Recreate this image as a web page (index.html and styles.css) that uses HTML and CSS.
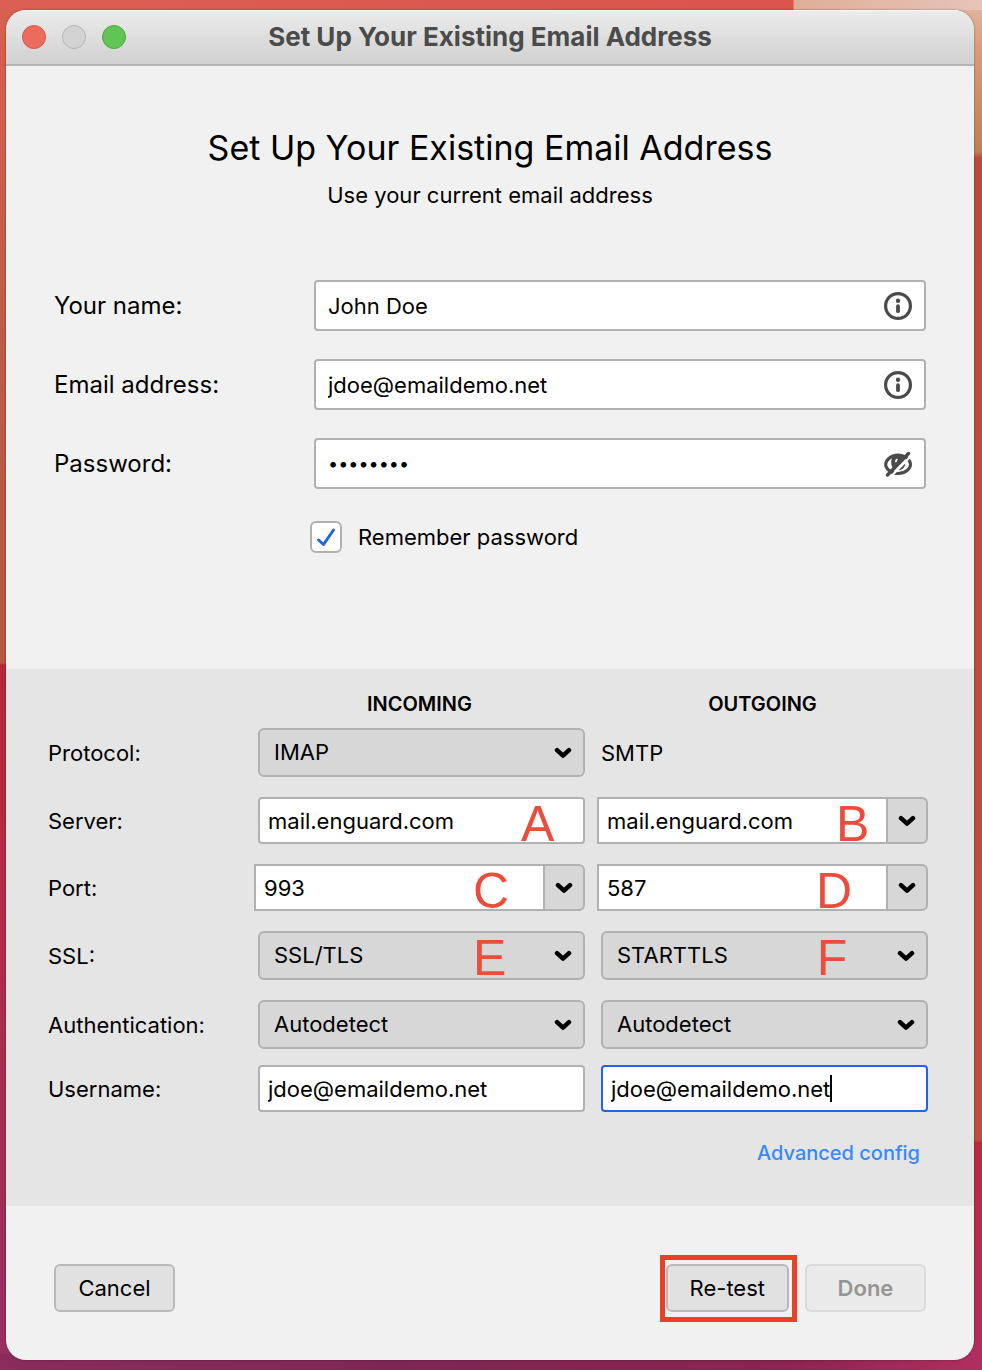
FILE: index.html
```html
<!DOCTYPE html>
<html lang="en">
<head>
    <meta charset="utf-8">
    <meta name="viewport" content="width=device-width, initial-scale=1.0">
    <title>Set Up Your Existing Email Address</title>
    <link rel="stylesheet" href="styles.css">
</head>
<body>
    <!-- Shared icons -->
    <svg class="icon-defs" width="0" height="0" aria-hidden="true">
        <symbol id="chevron" viewBox="0 0 18 12">
            <path d="M3 3.200l6 5.500 6-5.500" fill="none" stroke="#000" stroke-width="4.500" stroke-linecap="round" stroke-linejoin="round"/>
        </symbol>
        <symbol id="info" viewBox="0 0 28 28">
            <circle cx="14" cy="14" r="12.400" fill="none" stroke="#4a4a4a" stroke-width="3.200"/>
            <circle cx="14" cy="8.700" r="2.200" fill="#4a4a4a"/>
            <path d="M14 14.200v5" stroke="#4a4a4a" stroke-width="3.800" stroke-linecap="round"/>
        </symbol>
    </svg>

    <div class="window">
        <div class="titlebar">
            <div class="lights">
                <span class="light light-close"></span>
                <span class="light light-min"></span>
                <span class="light light-zoom"></span>
            </div>
            <div class="titlebar-text">Set Up Your Existing Email Address</div>
        </div>

        <form>
            <div class="account">
                <h1>Set Up Your Existing Email Address</h1>
                <p class="subtitle">Use your current email address</p>

                <div class="account-row">
                    <label for="realname">Your name:</label>
                    <div class="field">
                        <input id="realname" type="text" value="John Doe">
                        <svg class="field-icon"><use href="#info"/></svg>
                    </div>
                </div>
                <div class="account-row">
                    <label for="email">Email address:</label>
                    <div class="field">
                        <input id="email" type="email" value="jdoe@emaildemo.net">
                        <svg class="field-icon"><use href="#info"/></svg>
                    </div>
                </div>
                <div class="account-row">
                    <label for="password">Password:</label>
                    <div class="field">
                        <input id="password" type="password" value="password">
                        <svg class="field-icon" viewBox="0 0 28 28">
                            <path d="M14 5C6.500 5 1.700 10.500 1.700 14.500S6.500 23.500 14 23.500 26.500 18.500 26.500 14.500 21.500 5 14 5z" fill="none" stroke="#4a4a4a" stroke-width="3"/>
                            <path d="M9 5h11l-2 5-8 9c-3-2-4-8-1-14z" fill="#4a4a4a"/>
                            <path d="M13.500 9.300c-1.300.6-1.800 1.900-1.500 3" fill="none" stroke="#fff" stroke-width="1.600"/>
                            <path d="M20 13.500c.2 3-2 5.300-5 5.700" fill="none" stroke="#4a4a4a" stroke-width="2.200"/>
                            <path d="M7 26.500L27.500 5.500" stroke="#fff" stroke-width="2.200"/>
                            <path d="M3.500 25L24.500 3.500" stroke="#4a4a4a" stroke-width="3.400" stroke-linecap="round"/>
                        </svg>
                    </div>
                </div>

                <label class="remember">
                    <span class="checkbox">
                        <input type="checkbox" checked>
                        <svg viewBox="0 0 32 32"><path d="M8.500 19l5 4.500L23.500 9" fill="none" stroke="#2264e5" stroke-width="3" stroke-linecap="round" stroke-linejoin="round"/></svg>
                    </span>
                    Remember password
                </label>
            </div>

            <div class="servers">
                <div class="row row-head">
                    <h2 class="incoming">Incoming</h2>
                    <h2>Outgoing</h2>
                </div>
                <div class="row">
                    <label for="in-protocol">Protocol:</label>
                    <div class="menu">
                        <select id="in-protocol"><option>IMAP</option><option>POP3</option></select>
                        <svg class="chevron"><use href="#chevron"/></svg>
                    </div>
                    <span>SMTP</span>
                </div>
                <div class="row">
                    <label for="in-server">Server:</label>
                    <div class="text">
                        <input id="in-server" type="text" value="mail.enguard.com">
                        <span class="mark mark-edge">A</span>
                    </div>
                    <div class="combo">
                        <input type="text" value="mail.enguard.com" aria-label="Outgoing server">
                        <button type="button" aria-label="Show servers"><svg class="chevron"><use href="#chevron"/></svg></button>
                        <span class="mark mark-combo">B</span>
                    </div>
                </div>
                <div class="row">
                    <label for="in-port">Port:</label>
                    <div class="combo">
                        <input id="in-port" type="text" value="993">
                        <button type="button" aria-label="Show ports"><svg class="chevron"><use href="#chevron"/></svg></button>
                        <span class="mark">C</span>
                    </div>
                    <div class="combo">
                        <input type="text" value="587" aria-label="Outgoing port">
                        <button type="button" aria-label="Show ports"><svg class="chevron"><use href="#chevron"/></svg></button>
                        <span class="mark">D</span>
                    </div>
                </div>
                <div class="row">
                    <label for="in-ssl">SSL:</label>
                    <div class="menu">
                        <select id="in-ssl"><option>SSL/TLS</option><option>STARTTLS</option></select>
                        <svg class="chevron"><use href="#chevron"/></svg>
                        <span class="mark">E</span>
                    </div>
                    <div class="menu">
                        <select aria-label="Outgoing SSL"><option>STARTTLS</option><option>SSL/TLS</option></select>
                        <svg class="chevron"><use href="#chevron"/></svg>
                        <span class="mark">F</span>
                    </div>
                </div>
                <div class="row row-auth">
                    <label for="in-auth">Authentication:</label>
                    <div class="menu">
                        <select id="in-auth"><option>Autodetect</option></select>
                        <svg class="chevron"><use href="#chevron"/></svg>
                    </div>
                    <div class="menu">
                        <select aria-label="Outgoing authentication"><option>Autodetect</option></select>
                        <svg class="chevron"><use href="#chevron"/></svg>
                    </div>
                </div>
                <div class="row row-user">
                    <label for="in-user">Username:</label>
                    <div class="text">
                        <input id="in-user" type="text" value="jdoe@emaildemo.net">
                    </div>
                    <div class="text">
                        <input class="active" type="text" value="jdoe@emaildemo.net" aria-label="Outgoing username">
                        <span class="caret"></span>
                    </div>
                </div>
                <div class="advanced"><a href="#">Advanced config</a></div>
            </div>

            <div class="footer">
                <button type="button" class="btn">Cancel</button>
                <div class="footer-right">
                    <div class="highlight"><button type="button" class="btn">Re-test</button></div>
                    <button type="submit" class="btn btn-done" disabled>Done</button>
                </div>
            </div>
        </form>
    </div>
</body>
</html>
```
FILE: styles.css
```css
* {
    box-sizing: border-box;
}
body {
    margin: 0;
    padding: 10px 8px 10px 6px;
    min-height: 100vh;
    font-family: Inter, "Liberation Sans", sans-serif;
    font-size: 22px;
    line-height: 28px;
    color: #000;
    background:
        linear-gradient(to right, #8a2c5c, #7f2753 40%, #8a2450 80%, #b02f60) bottom / 100% 16px no-repeat,
        linear-gradient(to right, #dc5f54, #d9544c 793px, #e0ae98 794px, #e6c4b8) top / 100% 10px no-repeat,
        linear-gradient(#e3b8a4, #d99b7a 50px, #bf8055 152px, #b94a40 158px, #bc4f42 1140px, #b92a42 1143px, #b02f60) right / 40px 100% no-repeat,
        linear-gradient(#d9604f, #b85a48 400px, #b4583f 663px, #b4283a 665px, #b02c46 900px, #962f60) left / 40px 100% no-repeat,
        #b94a40;
}
h1, h2, p {
    margin: 0;
}
input, select, button {
    font: inherit;
    color: inherit;
    margin: 0;
    outline: none;
}
.icon-defs {
    position: absolute;
}
.window {
    background: #f1f1f1;
    border-radius: 20px;
    overflow: hidden;
    box-shadow: 0 0 2px rgba(0, 0, 0, 0.5);
}

/* Title bar */
.titlebar {
    display: grid;
    grid-template-columns: 120px 1fr 120px;
    align-items: center;
    height: 56px;
    padding: 0 16px;
    background: linear-gradient(#ececec, #d1d1d1);
    border-bottom: 2px solid #b4b4b4;
    box-shadow: inset 0 1px 0 #f8f8f8;
}
.lights {
    display: flex;
    gap: 16px;
}
.light {
    width: 24px;
    height: 24px;
    border-radius: 50%;
    border: 1px solid;
}
.light-close {
    background: #ed6a5e;
    border-color: #d65548;
}
.light-min {
    background: #d3d3d3;
    border-color: #b5b5b5;
}
.light-zoom {
    background: #61c554;
    border-color: #4fa73f;
}
.titlebar-text {
    font-size: 26px;
    font-weight: 700;
    text-align: center;
    color: #4b4b4b;
    white-space: nowrap;
}

/* Account details */
.account {
    padding: 60px 48px 116px;
}
h1 {
    font-size: 34px;
    font-weight: 400;
    line-height: 44px;
    text-align: center;
}
.subtitle {
    margin: 11px 0 71px;
    text-align: center;
}
.account-row {
    display: grid;
    grid-template-columns: 260px minmax(0, 1fr);
    align-items: center;
    margin-bottom: 28px;
}
.account-row label {
    font-size: 24px;
}
.field, .text, .menu, .combo {
    position: relative;
    display: flex;
}
.field input, .text input, .combo input {
    flex: 1;
    min-width: 0;
    background: #fff;
    border: 2px solid #b1b1b1;
    border-radius: 4px;
}
.field input {
    height: 51px;
    padding: 0 50px 0 12px;
}
.field input[type="password"] {
    font-size: 18px;
}
.field-icon {
    position: absolute;
    top: 12px;
    right: 14px;
    width: 28px;
    height: 28px;
}
.remember {
    display: flex;
    align-items: center;
    gap: 16px;
    width: fit-content;
    margin: 32px 0 0 256px;
}
.checkbox {
    position: relative;
    width: 32px;
    height: 32px;
}
.checkbox input {
    appearance: none;
    display: block;
    width: 32px;
    height: 32px;
    background: #fff;
    border: 2px solid #b1b1b1;
    border-radius: 6px;
}
.checkbox svg {
    position: absolute;
    top: 0;
    left: 0;
    pointer-events: none;
}

/* Server settings */
.servers {
    padding: 23px 46px 38px 42px;
    background: #e5e5e5;
}
.row {
    display: grid;
    grid-template-columns: 194px minmax(0, 1fr) minmax(0, 1fr);
    column-gap: 16px;
    align-items: center;
    margin-bottom: 20px;
}
.row-head {
    margin-bottom: 12px;
}
.row-auth {
    margin-bottom: 16px;
}
.row-user {
    margin-bottom: 26px;
}
h2 {
    padding-right: 4px;
    font-size: 20px;
    font-weight: 600;
    line-height: 24px;
    text-align: center;
    text-transform: uppercase;
}
.incoming {
    grid-column: 2;
}
.text input, .combo input {
    height: 47px;
    padding: 0 8px;
}
.text .active {
    border-color: #2264e5;
}
.menu select {
    appearance: none;
    flex: 1;
    min-width: 0;
    height: 49px;
    padding: 0 40px 2px 14px;
    background: #d7d7d7;
    border: 2px solid #b1b1b1;
    border-radius: 6px;
}
.chevron {
    width: 18px;
    height: 12px;
}
.menu .chevron {
    position: absolute;
    top: 19px;
    right: 13px;
    pointer-events: none;
}
.combo {
    margin-left: -4px;
}
.combo input {
    border-right: 0;
    border-radius: 0;
}
.combo button {
    display: flex;
    align-items: center;
    justify-content: center;
    width: 42px;
    padding: 0;
    background: #d7d7d7;
    border: 2px solid #b1b1b1;
    border-radius: 0 6px 6px 0;
}
.mark {
    position: absolute;
    top: 0;
    right: 80px;
    width: 32px;
    font-family: "Liberation Sans", Arial, sans-serif;
    font-size: 50px;
    line-height: 54px;
    text-align: center;
    color: #eb4d3d;
    pointer-events: none;
}
.mark-edge {
    right: 32px;
}
.mark-combo {
    right: 60px;
}
.caret {
    position: absolute;
    top: 10px;
    left: 229px;
    width: 2px;
    height: 27px;
    background: #000;
}
.advanced {
    padding-right: 8px;
    font-size: 20px;
    font-weight: 500;
    line-height: 30px;
    text-align: right;
}
.advanced a {
    color: #3689f7;
    text-decoration: none;
}

/* Buttons */
.footer {
    display: flex;
    justify-content: space-between;
    padding: 58px 48px 48px;
}
.footer-right {
    display: flex;
    gap: 16px;
}
.btn {
    min-width: 121px;
    height: 48px;
    padding: 0 22px;
    background: #e1e1e1;
    border: 2px solid #b9b9b9;
    border-radius: 6px;
}
.btn-done {
    font-weight: 600;
    color: #959595;
    background: #eaeaea;
    border-color: #dadada;
}
.highlight {
    position: relative;
}
/* Red box drawn round the button */
.highlight::after {
    content: "";
    position: absolute;
    top: -9px;
    right: -8px;
    bottom: -10px;
    left: -6px;
    border: 5px solid #ea4025;
    pointer-events: none;
}
```
